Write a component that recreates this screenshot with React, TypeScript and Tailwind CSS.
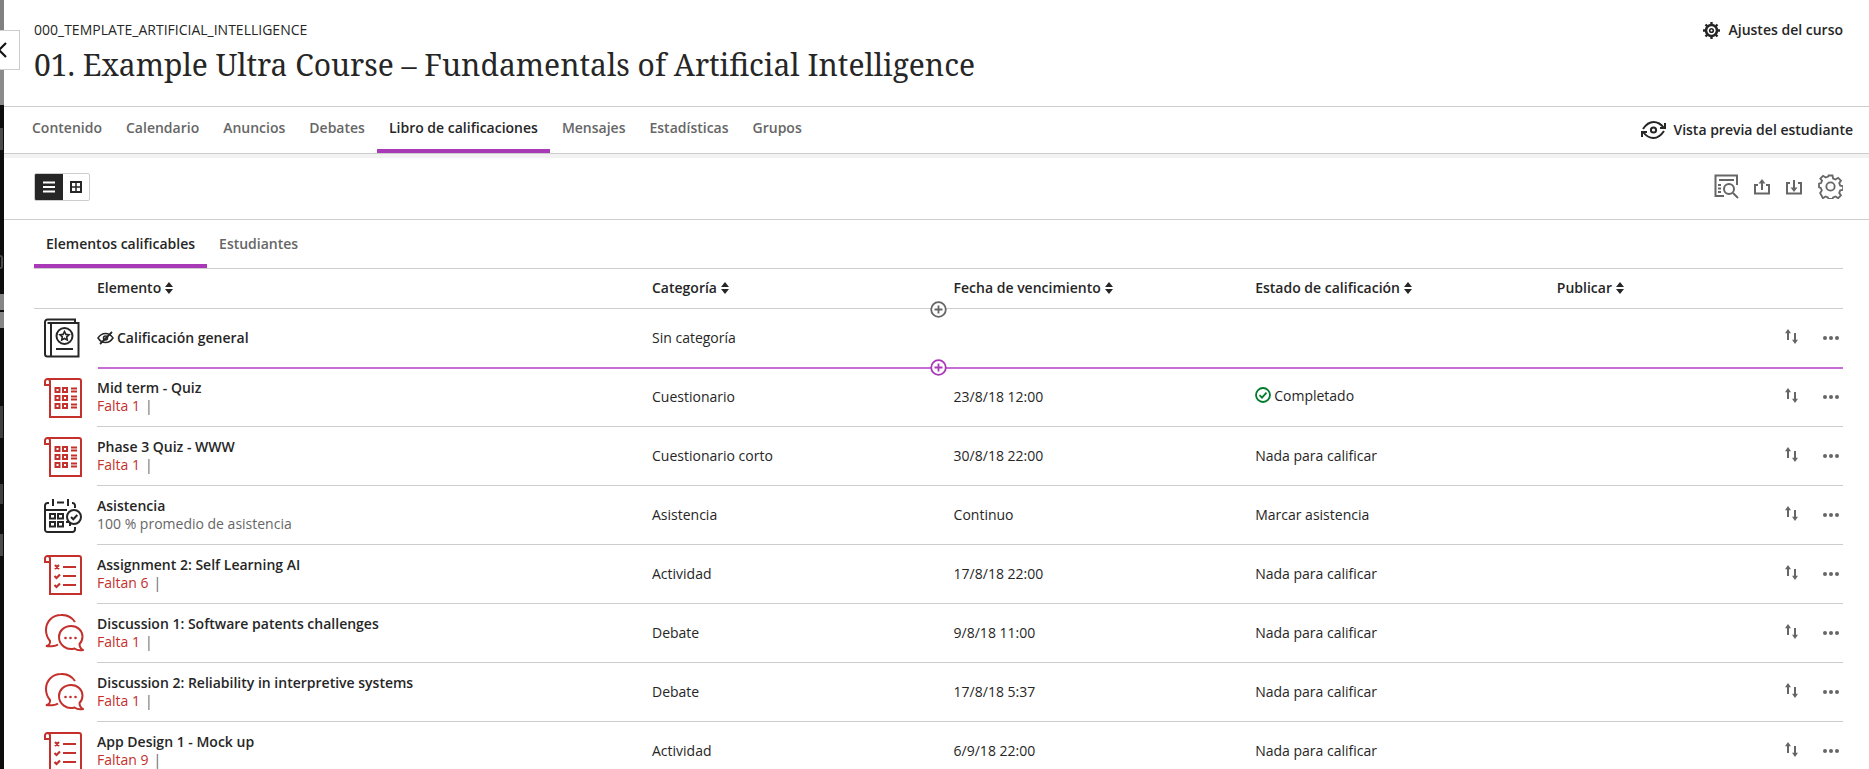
import React from "react";

const Sort = () => (
  <svg width="8" height="12" viewBox="0 0 8 12" className="ml-[4px] inline-block fill-[#262626]">
    <path d="M4 0 8 5H0zM4 12 0 7h8z" />
  </svg>
);

const Header = ({ w, children }: { w: string; children: string }) => (
  <div className={`${w} flex items-center`}>
    <span>{children}</span>
    <Sort />
  </div>
);

const BookIcon = () => (
  <svg width="38" height="40" viewBox="0 0 38 40" fill="none" stroke="#262626" strokeWidth="2">
    <path d="M3 36V4a2.500 2.500 0 0 1 2.500-2.500H33V5" />
    <path d="M5.500 5H36.500V38.500H5.500A2.500 2.500 0 0 1 3 36V6" />
    <path d="M9 5v33" />
    <circle cx="22.500" cy="18" r="8" />
    <path d="m22.500 13.500 1.400 2.900 3.100.4-2.300 2.100.6 3.100-2.800-1.500-2.800 1.500.6-3.100-2.300-2.100 3.100-.4z" strokeWidth="1.600" />
    <path d="M14 31h17" />
  </svg>
);

const Scroll = ({ children }: { children: React.ReactNode }) => (
  <svg width="38" height="40" viewBox="0 0 38 40" fill="none" stroke="#c4302b" strokeWidth="2">
    <path d="M6 7H1V3.500A2.500 2.500 0 0 1 3.500 1H35a2 2 0 0 1 2 2v36H6V3.500A2.500 2.500 0 0 0 3.500 1" />
    {children}
  </svg>
);

const QuizIcon = () => (
  <Scroll>
    {[12, 20, 28].map((y) => (
      <g key={y}>
        <rect x="11.500" y={y - 2} width="4" height="4" />
        <rect x="19" y={y - 2} width="4" height="4" />
        <path d={`M27 ${y - 1.500}h6M27 ${y + 1.500}h6`} />
      </g>
    ))}
  </Scroll>
);

const ListIcon = () => (
  <Scroll>
    <path d="m11 10 4 4M15 10l-4 4M19 12h13" strokeWidth="2.200" />
    <path d="m10.500 21 2 2 3.500-3.500M19 21h13" strokeWidth="2.200" />
    <path d="m10.500 30 2 2 3.500-3.500M19 30h13" strokeWidth="2.200" />
  </Scroll>
);

const CalendarIcon = () => (
  <svg width="38" height="36" viewBox="0 0 38 36" fill="none" stroke="#262626" strokeWidth="2">
    <path d="M5 5H3.500A2.500 2.500 0 0 0 1 7.500v24A2.500 2.500 0 0 0 3.500 34h25a2.500 2.500 0 0 0 2.500-2.500V29" />
    <path d="M28 5h.5A2.500 2.500 0 0 1 31 7.500V10" />
    <path d="M9 1v7M24 1v7M13 4.500h7M1 12h22" />
    <rect x="6" y="16" width="5" height="4.500" />
    <rect x="14" y="16" width="5" height="4.500" />
    <rect x="6" y="24" width="5" height="4.500" />
    <rect x="14" y="24" width="5" height="4.500" />
    <path d="M22 24h4v4" />
    <circle cx="30" cy="19" r="7" fill="#fff" />
    <path d="m27 19 2.300 2.300 4-4.300" />
  </svg>
);

const ChatIcon = () => (
  <svg width="40" height="39" viewBox="0 0 40 39" fill="none" stroke="#c4302b" strokeWidth="2">
    <path d="M31 8A16 16 0 0 0 17 1C8 1 2 8 2 16c0 4 1.500 8 4 11 .3 2-1 4.500-4 5 3 .6 9.500.6 12-1.500" />
    <path d="M27 12c7 0 11.500 5 11.500 10.500 0 3-1 5.500-3 7.500 0 2.500 1 4.500 3.500 6-3 .6-6.500 0-8.500-1.500A12 12 0 0 1 15 23c0-6 5-11 12-11z" />
    <circle cx="21.500" cy="24" r="1.300" fill="#c4302b" stroke="none" />
    <circle cx="26.500" cy="24" r="1.300" fill="#c4302b" stroke="none" />
    <circle cx="31.500" cy="24" r="1.300" fill="#c4302b" stroke="none" />
  </svg>
);

const EyeOff = () => (
  <svg width="17" height="14" viewBox="0 0 17 14" fill="none" stroke="#262626" strokeWidth="1.500" className="mr-[3px]">
    <path d="M1 7c2-3 4.500-4.500 7.500-4.500S14 4 16 7c-2 3-4.500 4.500-7.500 4.500S3 10 1 7z" />
    <circle cx="8.500" cy="7" r="2" />
    <path d="M3 13 15 1" strokeWidth="1.800" />
  </svg>
);

const RowActions = () => (
  <div className="ml-auto flex items-center">
    <svg width="13" height="15" viewBox="0 0 13 15" className="mt-[-4px] fill-[#666666]">
      <path d="M3 0l3 4.200H4V11H2V4.200H0zM10 15l-3-4.200h2V4h2v6.800h2z" />
    </svg>
    <svg width="16" height="4" viewBox="0 0 16 4" className="ml-[25px] mr-[4px] fill-[#666666]">
      <circle cx="2" cy="2" r="2" />
      <circle cx="8" cy="2" r="2" />
      <circle cx="14" cy="2" r="2" />
    </svg>
  </div>
);

type Row = {
  icon: React.ReactNode;
  title: string;
  sub: string;
  red?: boolean;
  cat: string;
  date: string;
  status: string;
};

const rows: Row[] = [
  { icon: <QuizIcon />, title: "Mid term - Quiz", sub: "Falta 1", red: true, cat: "Cuestionario", date: "23/8/18 12:00", status: "Completado" },
  { icon: <QuizIcon />, title: "Phase 3 Quiz - WWW", sub: "Falta 1", red: true, cat: "Cuestionario corto", date: "30/8/18 22:00", status: "Nada para calificar" },
  { icon: <CalendarIcon />, title: "Asistencia", sub: "100 % promedio de asistencia", cat: "Asistencia", date: "Continuo", status: "Marcar asistencia" },
  { icon: <ListIcon />, title: "Assignment 2: Self Learning AI", sub: "Faltan 6", red: true, cat: "Actividad", date: "17/8/18 22:00", status: "Nada para calificar" },
  { icon: <ChatIcon />, title: "Discussion 1: Software patents challenges", sub: "Falta 1", red: true, cat: "Debate", date: "9/8/18 11:00", status: "Nada para calificar" },
  { icon: <ChatIcon />, title: "Discussion 2: Reliability in interpretive systems", sub: "Falta 1", red: true, cat: "Debate", date: "17/8/18 5:37", status: "Nada para calificar" },
  { icon: <ListIcon />, title: "App Design 1 - Mock up", sub: "Faltan 9", red: true, cat: "Actividad", date: "6/9/18 22:00", status: "Nada para calificar" },
];

const nav = ["Contenido", "Calendario", "Anuncios", "Debates", "Libro de calificaciones", "Mensajes", "Estadísticas", "Grupos"];

const Plus = ({ purple }: { purple?: boolean }) => (
  <svg width="17" height="17" viewBox="0 0 17 17" className="absolute left-[896px] top-[-8px] fill-white" stroke={purple ? "#a83ab8" : "#666666"} strokeWidth="1.800">
    <circle cx="8.500" cy="8.500" r="7.300" />
    <path d="M8.500 4.500v8M4.500 8.500h8" />
  </svg>
);

export default function App() {
  return (
    <div className="relative flex h-[769px] w-[1869px] overflow-hidden bg-white font-['Open_Sans',sans-serif] text-[14px] text-[#262626]">
      <div className="flex w-[4px] shrink-0 flex-col bg-[#0d0d0d]">
        <div className="h-[30px] shrink-0 bg-[#808080]" />
        <div className="h-[40px] shrink-0 bg-[#bdbdbd]" />
        <div className="h-[35px] shrink-0 bg-[#8a8a8a]" />
        <div className="mt-[23px] h-[22px] w-[3px] shrink-0 bg-[#4a4a4a]" />
        <div className="mt-[105px] h-[14px] w-[3px] shrink-0 rounded-r-full border-2 border-l-0 border-[#4a4a4a]" />
        <div className="mt-[25px] h-[16px] w-[4px] shrink-0 bg-[#858585]" />
        <div className="h-[2px] shrink-0" />
        <div className="h-[16px] w-[4px] shrink-0 bg-[#858585]" />
        <div className="mt-[78px] h-[32px] w-[3px] shrink-0 bg-[#3f3f3f]" />
        <div className="mt-[46px] h-[20px] w-[3px] shrink-0 bg-[#3f3f3f]" />
        <div className="mt-[30px] h-[22px] w-[3px] shrink-0 bg-[#4a4a4a]" />
      </div>

      <button className="absolute left-0 top-[30px] flex h-[40px] w-[20px] items-center overflow-hidden border border-l-0 border-[#cdcdcd] bg-white">
        <svg width="10" height="16" viewBox="0 0 10 16" fill="none" stroke="#111111" strokeWidth="2.200" className="ml-[-2px]">
          <path d="M8 1 1 8l7 7" />
        </svg>
      </button>

      <div className="flex min-w-0 flex-1 flex-col">
        <header className="flex h-[106px] shrink-0 items-start justify-between pl-[30px] pr-[26px]">
          <div className="pt-[20px]">
            <div className="text-[14px] leading-[20px]">000_TEMPLATE_ARTIFICIAL_INTELLIGENCE</div>
            <h1 className="mt-[5px] font-['Noto_Serif','DejaVu_Serif',serif] text-[30px] leading-[40px] text-[#262626]">
              01. Example Ultra Course – Fundamentals of Artificial Intelligence
            </h1>
          </div>
          <div className="flex items-center pt-[20px] font-[560]">
            <svg width="17" height="17" viewBox="0 0 17 17" fill="none" stroke="#262626" className="mr-[9px]">
              <circle cx="8.500" cy="8.500" r="5.500" strokeWidth="2.600" />
              <path d="M8.500 0v3M8.500 14v3M0 8.500h3M14 8.500h3M2.500 2.500l2 2M12.500 12.500l2 2M14.500 2.500l-2 2M4.500 12.500l-2 2" strokeWidth="2.400" />
              <circle cx="8.500" cy="8.500" r="1.800" strokeWidth="1.600" />
            </svg>
            <span className="leading-[20px]">Ajustes del curso</span>
          </div>
        </header>

        <nav className="flex h-[48px] shrink-0 items-stretch border-y border-[#cdcdcd] pl-[16px] pr-[16px]">
          {nav.map((n) => (
            <div
              key={n}
              className={
                n === "Libro de calificaciones"
                  ? "flex items-center border-b-4 border-[#a83ab8] px-[12px] pb-[2px] font-[560] text-[#262626]"
                  : "flex items-center border-b-4 border-transparent px-[12px] pb-[2px] font-[560] text-[#666666]"
              }
            >
              {n}
            </div>
          ))}
          <div className="ml-auto flex items-center pb-[1px] font-[560]">
            <svg width="25" height="20" viewBox="0 0 25 20" fill="none" stroke="#262626" strokeWidth="2" className="mr-[7px]">
              <path d="M2 9c3-4.500 6.500-7 10.500-7S20 4 23 8" />
              <path d="M23 11c-3 4.500-6.500 7-10.500 7S5 16 2 12" />
              <circle cx="12.500" cy="10" r="2.600" />
              <path d="M24 3v5h-5M1 17v-5h5" />
            </svg>
            Vista previa del estudiante
          </div>
        </nav>

        <div className="h-[4px] shrink-0 bg-[#f2f2f2]" />

        <div className="flex h-[62px] shrink-0 items-center justify-between border-b border-[#cdcdcd] pb-[4px] pl-[30px] pr-[26px]">
          <div className="flex h-[28px] w-[56px] overflow-hidden rounded-[2px] border border-[#cdcdcd]">
            <div className="flex w-[28px] items-center justify-center bg-[#262626]">
              <svg width="14" height="12" viewBox="0 0 14 12" fill="none" stroke="#ffffff" strokeWidth="2">
                <path d="M1 1.500h12M1 6h12M1 10.500h12" />
              </svg>
            </div>
            <div className="flex flex-1 items-center justify-center">
              <svg width="12" height="12" viewBox="0 0 12 12" fill="none" stroke="#262626" strokeWidth="2">
                <rect x="1" y="1" width="10" height="10" />
                <path d="M6 1v10M1 6h10" strokeWidth="1.500" />
              </svg>
            </div>
          </div>
          <div className="flex items-center text-[#666666]">
            <svg width="25" height="25" viewBox="0 0 25 25" fill="none" stroke="#666666" strokeWidth="2">
              <path d="M23 11V1.500H1.500V22H10" />
              <path d="M5 6h15M4 11h3M4 14.500h3M4 18h3" />
              <circle cx="15" cy="15" r="5" />
              <path d="m19 19 5 5" />
            </svg>
            <svg width="16" height="16" viewBox="0 0 16 16" fill="none" stroke="#666666" strokeWidth="2" className="ml-[15px]">
              <path d="M4 6H1v8.500h14V6h-3" />
              <path d="M8 11V2" />
              <path d="M8 0 11.500 4.500h-7z" fill="#666666" stroke="none" />
            </svg>
            <svg width="16" height="16" viewBox="0 0 16 16" fill="none" stroke="#666666" strokeWidth="2" className="ml-[16px]">
              <path d="M4 4H1v10.500h14V4h-3" />
              <path d="M8 1v9" />
              <path d="M8 13 4.500 8.500h7z" fill="#666666" stroke="none" />
            </svg>
            <svg width="25" height="25" viewBox="0 0 24 24" fill="none" stroke="#666666" strokeWidth="1.800" className="ml-[16px]">
              <path d="M10 1.500h4l.6 3 2.400 1 2.600-1.700 2.800 2.800-1.700 2.600 1 2.400 3 .6-.2 3.600-2.800.6-1 2.400 1.700 2.600-2.800 2.800-2.600-1.700-2.400 1-.6 1.500h-4l-.6-1.500-2.400-1-2.600 1.700L1.600 19l1.700-2.600-1-2.400-1.800-.6v-3.800l2-.6 1-2.400L1.800 4.600 4.600 1.800l2.600 1.700 2.400-1z" transform="translate(0.500 0) scale(.96)" />
              <circle cx="12" cy="12" r="4" />
            </svg>
          </div>
        </div>

        <div className="flex-1 pl-[30px] pr-[26px]">
          <div className="flex h-[49px] border-b border-[#cdcdcd] font-[560]">
            <div className="flex items-center border-b-4 border-[#a83ab8] px-[12px] pt-[2px]">Elementos calificables</div>
            <div className="flex items-center border-b-4 border-transparent px-[12px] pt-[2px] text-[#666666]">Estudiantes</div>
          </div>

          <div className="flex h-[39px] items-center pb-[2px] pl-[63px] font-[560]">
            <Header w="w-[555px]">Elemento</Header>
            <Header w="w-[301.600px]">Categoría</Header>
            <Header w="w-[301.600px]">Fecha de vencimiento</Header>
            <Header w="w-[301.600px]">Estado de calificación</Header>
            <Header w="w-[200px]">Publicar</Header>
          </div>

          <div className="relative flex h-[59px] border-t border-[#cdcdcd]">
            <Plus />
            <div className="flex w-[63px] items-center pl-[8px]">
              <BookIcon />
            </div>
            <div className="flex flex-1 items-center">
              <div className="flex w-[555px] items-center pb-[1px] font-[560]">
                <EyeOff />
                Calificación general
              </div>
              <div className="pb-[1px]">Sin categoría</div>
              <RowActions />
            </div>
          </div>

          <div className="relative h-px">
            <div className="absolute left-[64px] right-0 top-0 border-t-[2px] border-[#c46dd4]" />
            <Plus purple />
          </div>

          {rows.map((r) => (
            <div key={r.title} className="flex h-[59px] shrink-0">
              <div className="flex w-[63px] items-center pl-[10px]">{r.icon}</div>
              <div className="flex flex-1 items-center border-b border-[#cdcdcd]">
                <div className="w-[555px]">
                  <div className="font-[560] leading-[18px]">{r.title}</div>
                  <div className={r.red ? "leading-[18px] text-[#c4302b]" : "leading-[18px] text-[#666666]"}>
                    {r.sub}
                    {r.red ? <span className="ml-[5px] text-[#666666]">|</span> : null}
                  </div>
                </div>
                <div className="w-[301.600px] pb-[2px]">{r.cat}</div>
                <div className="w-[301.600px] pb-[2px]">{r.date}</div>
                <div className={r.status === "Completado" ? "flex items-center pb-[4px]" : "flex items-center pb-[2px]"}>
                  {r.status === "Completado" ? (
                    <svg width="16" height="16" viewBox="0 0 16 16" fill="none" stroke="#037b2c" strokeWidth="1.800" className="mr-[3px]">
                      <circle cx="8" cy="8" r="7" />
                      <path d="m4.500 8.200 2.500 2.500 4.500-5" />
                    </svg>
                  ) : null}
                  {r.status}
                </div>
                <RowActions />
              </div>
            </div>
          ))}
        </div>
      </div>
    </div>
  );
}
